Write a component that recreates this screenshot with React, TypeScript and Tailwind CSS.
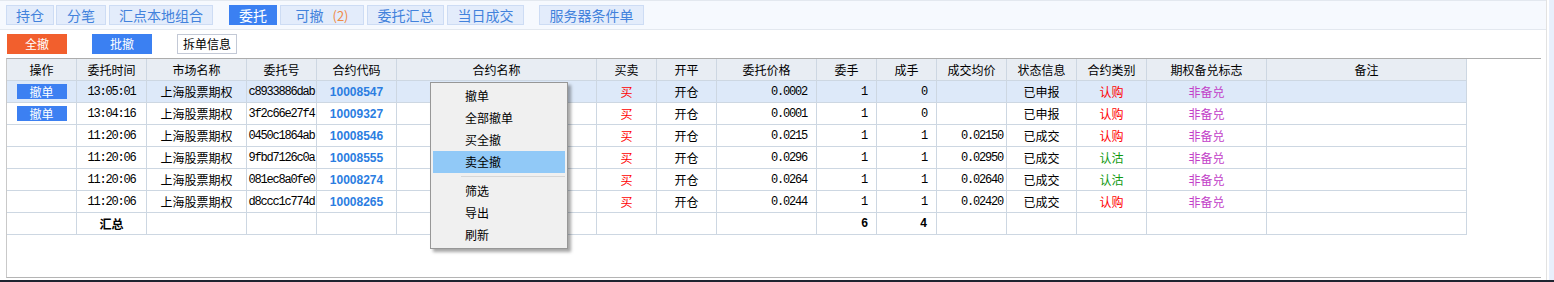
import React from "react";

const CJK = "font-['Noto_Sans_CJK_SC',sans-serif]";
const MONO = "font-['Liberation_Mono',monospace] text-[12px] tracking-[-1.2px]";

type Row = {
  btn: boolean;
  time: string;
  id: string;
  code: string;
  price: string;
  wt: string;
  cj: string;
  avg: string;
  status: string;
  type: string;
};

const rows: Row[] = [
  { btn: true, time: "13:05:01", id: "c8933886dab", code: "10008547", price: "0.0002", wt: "1", cj: "0", avg: "", status: "已申报", type: "认购" },
  { btn: true, time: "13:04:16", id: "3f2c66e27f4", code: "10009327", price: "0.0001", wt: "1", cj: "0", avg: "", status: "已申报", type: "认购" },
  { btn: false, time: "11:20:06", id: "0450c1864ab", code: "10008546", price: "0.0215", wt: "1", cj: "1", avg: "0.02150", status: "已成交", type: "认购" },
  { btn: false, time: "11:20:06", id: "9fbd7126c0a", code: "10008555", price: "0.0296", wt: "1", cj: "1", avg: "0.02950", status: "已成交", type: "认沽" },
  { btn: false, time: "11:20:06", id: "081ec8a0fe0", code: "10008274", price: "0.0264", wt: "1", cj: "1", avg: "0.02640", status: "已成交", type: "认沽" },
  { btn: false, time: "11:20:06", id: "d8ccc1c774d", code: "10008265", price: "0.0244", wt: "1", cj: "1", avg: "0.02420", status: "已成交", type: "认购" },
];

const headers = [
  "操作", "委托时间", "市场名称", "委托号", "合约代码", "合约名称", "买卖", "开平",
  "委托价格", "委手", "成手", "成交均价", "状态信息", "合约类别", "期权备兑标志", "备注",
];

function Cell({ className = "", children }: { className?: string; children?: React.ReactNode }) {
  return (
    <div className={"h-[22px] border-r border-b border-[#cdd7e2] flex items-center overflow-hidden whitespace-nowrap " + className}>
      {children}
    </div>
  );
}

function Tab({ label, ml, w, active, extra }: { label: string; ml: string; w: string; active?: boolean; extra?: string }) {
  return (
    <div
      className={
        "h-[20px] flex items-center justify-center border text-[14px] leading-none " +
        ml + " " + w + " " +
        (active ? "bg-[#3b80f2] border-[#3b80f2] text-white" : "bg-[#e3ecfb] border-[#cddcf4] text-[#4282dc]")
      }
    >
      <span>{label}</span>
      {extra && <span className="ml-[9px] text-[13px] text-[#f08a46]">{extra}</span>}
    </div>
  );
}

export default function App() {
  const grid =
    "grid grid-cols-[70px_70px_100px_70px_80px_200px_60px_60px_100px_60px_60px_70px_70px_70px_120px_200px] w-[1460px]";
  return (
    <div className={"w-[1554px] h-[282px] flex flex-col bg-white overflow-hidden text-black " + CJK}>
      <div className="h-[280px] flex flex-row">
        <div className="w-[1546px] flex flex-col">
          {/* toolbar */}
          <div className="h-[30px] bg-[#f6f9fe] border-t border-b border-[#e3e8ef] flex items-center">
            <Tab label="持仓" ml="ml-[6px]" w="w-[48px]" />
            <Tab label="分笔" ml="ml-[2px]" w="w-[50px]" />
            <Tab label="汇点本地组合" ml="ml-[3px]" w="w-[104px]" />
            <Tab label="委托" ml="ml-[16px]" w="w-[48px]" active />
            <Tab label="可撤" ml="ml-[3px]" w="w-[84px]" extra="(2)" />
            <Tab label="委托汇总" ml="ml-[3px]" w="w-[77px]" />
            <Tab label="当日成交" ml="ml-[3px]" w="w-[77px]" />
            <Tab label="服务器条件单" ml="ml-[15px]" w="w-[105px]" />
          </div>
          {/* action row */}
          <div className="h-[28px] flex items-start pt-[4px]">
            <div className="ml-[7px] w-[60px] h-[20px] bg-[#f25f2d] text-white text-[12px] flex items-center justify-center leading-none">全撤</div>
            <div className="ml-[25px] w-[60px] h-[20px] bg-[#3b80f2] text-white text-[12px] flex items-center justify-center leading-none">批撤</div>
            <div className="ml-[25px] w-[60px] h-[20px] bg-white border border-[#c3c9d6] text-[12px] flex items-center justify-center leading-none">拆单信息</div>
          </div>
          {/* table container */}
          <div className="ml-[6px] w-[1535px] h-[220px] border-l border-l-[#c9c9c9] border-t border-t-[#acacac] border-b border-b-[#b4b4b4] relative bg-white">
            <div className={grid + " text-[12px]"}>
              {headers.map((h) => (
                <Cell key={h} className="bg-[#e8edf3] justify-center">{h}</Cell>
              ))}
              {rows.map((r, i) => {
                const bg = i === 0 ? "bg-[#dde9f9]" : "bg-white";
                return (
                  <React.Fragment key={i}>
                    <Cell className={bg + " justify-center"}>
                      {r.btn && (
                        <div className="w-[50px] h-[15px] bg-[#3c80f2] text-white text-[12px] leading-none flex items-center justify-center">撤单</div>
                      )}
                    </Cell>
                    <Cell className={bg + " justify-center " + MONO}>{r.time}</Cell>
                    <Cell className={bg + " justify-center"}>上海股票期权</Cell>
                    <Cell className={bg + " justify-center " + MONO}>{r.id}</Cell>
                    <Cell className={bg + " justify-center font-['Liberation_Sans',sans-serif] font-bold text-[12px] text-[#2b7de1]"}>{r.code}</Cell>
                    <Cell className={bg}></Cell>
                    <Cell className={bg + " justify-center text-[#ff0000]"}>买</Cell>
                    <Cell className={bg + " justify-center"}>开仓</Cell>
                    <Cell className={bg + " justify-end pr-[9px] " + MONO}>{r.price}</Cell>
                    <Cell className={bg + " justify-end pr-[9px] " + MONO}>{r.wt}</Cell>
                    <Cell className={bg + " justify-end pr-[9px] " + MONO}>{r.cj}</Cell>
                    <Cell className={bg + " justify-end pr-[3px] " + MONO}>{r.avg}</Cell>
                    <Cell className={bg + " justify-center"}>{r.status}</Cell>
                    <Cell className={bg + " justify-center " + (r.type === "认购" ? "text-[#ff0000]" : "text-[#119a11]")}>{r.type}</Cell>
                    <Cell className={bg + " justify-center text-[#c23ec8]"}>非备兑</Cell>
                    <Cell className={bg}></Cell>
                  </React.Fragment>
                );
              })}
              {/* total row */}
              <Cell></Cell>
              <Cell className="justify-center font-bold">汇总</Cell>
              <Cell></Cell>
              <Cell></Cell>
              <Cell></Cell>
              <Cell></Cell>
              <Cell></Cell>
              <Cell></Cell>
              <Cell></Cell>
              <Cell className={"justify-end pr-[9px] font-bold " + MONO}>6</Cell>
              <Cell className={"justify-end pr-[10px] font-bold " + MONO}>4</Cell>
              <Cell></Cell>
              <Cell></Cell>
              <Cell></Cell>
              <Cell></Cell>
              <Cell></Cell>
            </div>

            {/* context menu */}
            <div className="absolute left-[423px] top-[23px] w-[138px] bg-[#f0f0f0] border border-[#979797] shadow-[3px_3px_3px_rgba(0,0,0,0.35)] pt-[2px] pb-[2px] text-[12px]">
              {["撤单", "全部撤单", "买全撤", "卖全撤"].map((t) => (
                <div
                  key={t}
                  className={"mx-[2px] h-[22px] flex items-center pl-[32px] leading-none " + (t === "卖全撤" ? "bg-[#91c9f7]" : "")}
                >
                  {t}
                </div>
              ))}
              <div className="h-[7px] flex items-center pl-[30px] pr-[2px]">
                <div className="h-px w-full bg-[#d6d6d6]" />
              </div>
              {["筛选", "导出", "刷新"].map((t) => (
                <div key={t} className="mx-[2px] h-[22px] flex items-center pl-[32px] leading-none">
                  {t}
                </div>
              ))}
            </div>
          </div>
          <div className="flex-1 bg-white" />
        </div>
        <div className="w-[1px] bg-[#e2e2e2]" />
        <div className="w-[2px] bg-white" />
        <div className="w-[5px] bg-[#e8effb]" />
      </div>
      <div className="h-[2px] bg-[#1e2430]" />
    </div>
  );
}
